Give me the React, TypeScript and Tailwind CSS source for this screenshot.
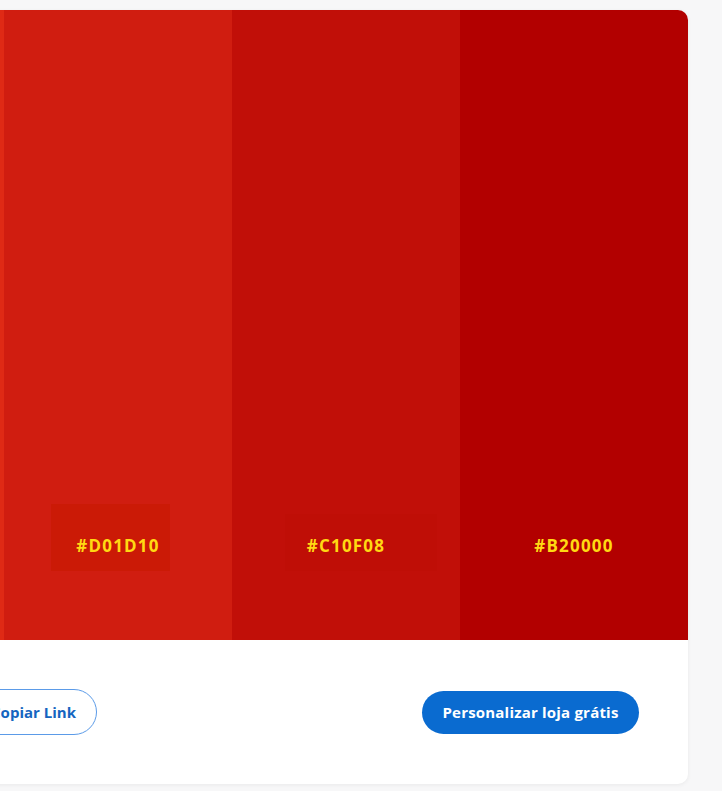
const swatches = [
  { hex: '#E8321C', label: '' },
  { hex: '#DF2A15', label: '' },
  { hex: '#D01D10', label: '#D01D10', box: 'bg-[#cb1a06] top-[-30px] bottom-[-13px] left-[-25px] right-[-10px]' },
  { hex: '#C10F08', label: '#C10F08', box: 'bg-[#bf0e06] top-[-20px] bottom-[-13px] left-[-22px] right-[-52px]' },
  { hex: '#B20000', label: '#B20000' },
];

const Swatch = ({ hex, label, box }: { hex: string; label: string; box?: string }) => (
  <div className="flex w-[228px] shrink-0 flex-col items-center justify-end pb-[82px]" style={{ backgroundColor: hex }}>
    <div className="relative flex h-[24px] items-center justify-center">
      {box && <div className={`absolute ${box}`} />}
      {label && <span className="relative text-[17px] font-bold tracking-[1.2px] text-[#ffd913]">{label}</span>}
    </div>
  </div>
);

export default function App() {
  return (
    <div className="h-[791px] w-[722px] overflow-hidden bg-[#f7f7f8] pt-[10px] font-['Open_Sans',sans-serif]">
      <div className="ml-[-452px] flex w-[1140px] flex-col overflow-hidden rounded-[10px] bg-white shadow-[0_1px_4px_rgba(0,0,0,0.06)]">
        <div className="flex h-[630px]">
          {swatches.map((s) => (
            <Swatch key={s.hex} {...s} />
          ))}
        </div>
        <div className="flex h-[144px] items-center justify-between pl-[422px] pr-[49px]">
          <button className="h-[46px] w-[127px] whitespace-nowrap rounded-full border border-[#5b9be8] text-[15px] font-bold text-[#1565c0]">
            Copiar Link
          </button>
          <button className="h-[43px] w-[217px] whitespace-nowrap rounded-full bg-[#0a6bd0] text-[15px] font-bold tracking-[0.2px] text-white">
            Personalizar loja grátis
          </button>
        </div>
      </div>
    </div>
  );
}
